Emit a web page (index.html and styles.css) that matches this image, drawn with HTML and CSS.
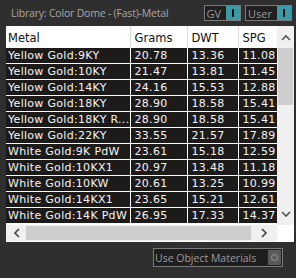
FILE: index.html
```html
<!DOCTYPE html>
<html lang="en">
<head>
    <meta charset="UTF-8">
    <title>Metal Library</title>
    <link rel="stylesheet" href="styles.css">
</head>
<body>
    <!-- top bar -->
    <div class="top">
        <span class="lib">Library: Color Dome - (Fast)-Metal</span>
        <span class="tog">GV<i></i></span>
        <span class="tog">User<i></i></span>
    </div>
    <!-- list -->
    <div class="panel">
        <div class="view">
            <div class="clip">
                <table class="grid">
                    <colgroup><col class="c1"><col class="c2"><col class="c3"><col class="c4"></colgroup>
                    <thead>
                        <tr><th>Metal</th><th>Grams</th><th>DWT</th><th>SPG</th></tr>
                    </thead>
                    <tbody>
                        <tr><td>Yellow Gold:9KY</td><td>20.78</td><td>13.36</td><td>11.08</td></tr>
                        <tr><td>Yellow Gold:10KY</td><td>21.47</td><td>13.81</td><td>11.45</td></tr>
                        <tr><td>Yellow Gold:14KY</td><td>24.16</td><td>15.53</td><td>12.88</td></tr>
                        <tr><td>Yellow Gold:18KY</td><td>28.90</td><td>18.58</td><td>15.41</td></tr>
                        <tr><td>Yellow Gold:18KY R...</td><td>28.90</td><td>18.58</td><td>15.41</td></tr>
                        <tr><td>Yellow Gold:22KY</td><td>33.55</td><td>21.57</td><td>17.89</td></tr>
                        <tr><td>White Gold:9K PdW</td><td>23.61</td><td>15.18</td><td>12.59</td></tr>
                        <tr><td>White Gold:10KX1</td><td>20.97</td><td>13.48</td><td>11.18</td></tr>
                        <tr><td>White Gold:10KW</td><td>20.61</td><td>13.25</td><td>10.99</td></tr>
                        <tr><td>White Gold:14KX1</td><td>23.65</td><td>15.21</td><td>12.61</td></tr>
                        <tr><td>White Gold:14K PdW</td><td>26.95</td><td>17.33</td><td>14.37</td></tr>
                    </tbody>
                </table>
            </div>
            <div class="vbar">
                <span class="arr"><svg width="10" height="7" viewBox="0 0 10 7"><path d="M1 6 L5 2 L9 6" fill="none" stroke="#555" stroke-width="1.6"/></svg></span>
                <span class="thumb"></span>
                <span class="rest"></span>
                <span class="arr"><svg width="10" height="7" viewBox="0 0 10 7"><path d="M1 1 L5 5 L9 1" fill="none" stroke="#555" stroke-width="1.6"/></svg></span>
            </div>
        </div>
        <div class="hbar">
            <span class="harr"><svg width="7" height="10" viewBox="0 0 7 10"><path d="M6 1 L2 5 L6 9" fill="none" stroke="#444" stroke-width="1.6"/></svg></span>
            <span class="hthumb"></span>
            <span class="harr wide"><svg width="7" height="10" viewBox="0 0 7 10"><path d="M1 1 L5 5 L1 9" fill="none" stroke="#444" stroke-width="1.6"/></svg></span>
            <span class="corner"></span>
        </div>
    </div>
    <!-- bottom -->
    <div class="foot">
        <span class="chk">Use Object Materials<i></i></span>
    </div>
</body>
</html>
```
FILE: styles.css
```css
body {margin: 0;background: #2f2f2f;font-family: "DejaVu Sans", Verdana, sans-serif;width: 296px;height: 278px;overflow: hidden;}

/*===== top bar =====*/
.top {display: flex;align-items: center;height: 26px;padding: 0 4px 0 11px;}
.lib {flex: 1;font-family: "Open Sans", sans-serif;font-size: 10.5px;color: #a8a8a8;letter-spacing: -0.2px;}
.tog {display: flex;align-items: center;height: 14px;margin-left: 4px;border: 1px solid #7a7a7a;background: #202020;color: #9a9a9a;font-family: "Open Sans", sans-serif;font-size: 11px;padding-left: 2px;}
.tog i {width: 14px;height: 14px;margin-left: 5px;background: #3a9ba6;position: relative;}
.tog i::after {content: "";position: absolute;left: 6px;top: 3px;width: 2px;height: 8px;background: #111;}

/*===== table panel =====*/
.panel {margin: 0 2px 0 6px;background: #fff;border-bottom: 1px solid #fff;}
.view {display: flex;}
.clip {width: 271px;height: 199px;overflow: hidden;}
.grid {border-collapse: collapse;table-layout: fixed;width: 320px;font-size: 11px;}
.c1 {width: 124px;}
.c2 {width: 57px;}
.c3 {width: 51px;}
.c4 {width: 88px;}
.grid th {height: 22px;box-sizing: border-box;background: #fff;color: #111;font-weight: normal;text-align: left;padding: 2px 4px 0;border-left: 1px solid #dcdcdc;font-size: 11.5px;}
.grid th:first-child {border-left: 0;padding-left: 2px;}
.grid td {height: 15px;padding: 0 2px 0 4px;background: #1d1b1a;color: #f4f4f4;border: 1px solid #fff;border-top: 0;white-space: nowrap;overflow: hidden;line-height: 15px;letter-spacing: 0.3px;}
.grid td:first-child {border-left: 0;padding-left: 2px;}

/*===== scrollbars =====*/
.vbar {width: 17px;height: 199px;display: flex;flex-direction: column;background: #f0f0f0;}
.arr {height: 22px;display: flex;align-items: center;justify-content: center;flex: none;}
.thumb {height: 57px;background: #cdcdcd;margin: 0 1px;flex: none;}
.rest {flex: 1;}
.hbar {display: flex;height: 16px;background: #f0f0f0;}
.harr {width: 20px;display: flex;align-items: center;justify-content: center;}
.harr.wide {width: 26px;}
.hthumb {width: 225px;background: #cdcdcd;margin: 1px 0;}
.corner {flex: 1;background: #fff;}

/*===== footer =====*/
.foot {display: flex;justify-content: flex-end;padding: 6px 13px 0 0;}
.chk {display: flex;align-items: center;width: 127px;height: 17px;border: 1px solid #7a7a7a;background: #1e1e1e;color: #9c9c9c;font-family: "Open Sans", sans-serif;font-size: 10.5px;padding-left: 1px;}
.chk i {margin-left: auto;margin-right: 1px;width: 13px;height: 15px;background: #5a5a5a;position: relative;}
.chk i::after {content: "";position: absolute;left: 3px;top: 4px;width: 5px;height: 5px;border: 1px solid #999;border-radius: 50%;}
```
